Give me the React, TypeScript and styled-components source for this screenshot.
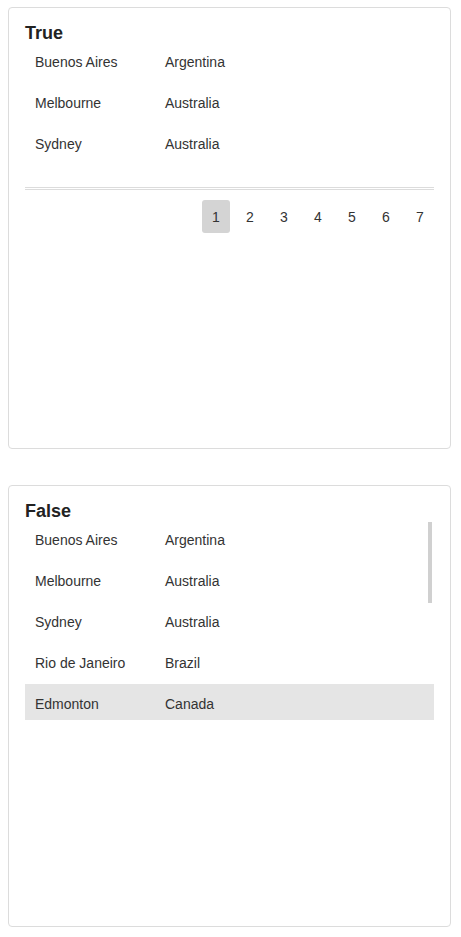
import React from "react";
import styled, { createGlobalStyle } from "styled-components";

const Global = createGlobalStyle`
  html, body { margin: 0; padding: 0; background: #fff; }
  body { font-family: "Liberation Sans", Arial, sans-serif; color: #333; }
`;

const Page = styled.div`
  display: flex;
  flex-direction: column;
  gap: 36px;
  padding: 7px 10px 10px 8px;
`;

const Card = styled.section`
  box-sizing: border-box;
  height: 442px;
  border: 1px solid #dcdcdc;
  border-radius: 4px;
  padding: 14px 16px;
  display: flex;
  flex-direction: column;
`;

const Title = styled.h3`
  margin: 1px 0 -1px;
  font-size: 18px;
  line-height: 20px;
  font-weight: 700;
  color: #222;
`;

const List = styled.div`
  position: relative;
  display: flex;
  flex-direction: column;
  gap: 5px;
`;

const Row = styled.div<{ $active?: boolean }>`
  display: flex;
  height: 36px;
  box-sizing: border-box;
  padding: 12px 10px 8px;
  font-size: 14px;
  line-height: 16px;
  color: #333;
  background: ${(p) => (p.$active ? "#e5e5e5" : "transparent")};
`;

const City = styled.span`
  width: 130px;
  flex: none;
`;

const Country = styled.span``;

const Divider = styled.div`
  margin-top: 27px;
  height: 1px;
  border-top: 1px solid #dcdcdc;
  border-bottom: 1px solid #dcdcdc;
`;

const Pager = styled.nav`
  display: flex;
  justify-content: flex-end;
  gap: 6px;
  margin-top: 10px;
`;

const PageButton = styled.button<{ $active?: boolean }>`
  width: 28px;
  height: 33px;
  padding: 0;
  border: none;
  border-radius: 3px;
  font-family: "Liberation Sans", Arial, sans-serif;
  font-size: 14px;
  color: #333;
  background: ${(p) => (p.$active ? "#d4d4d4" : "transparent")};
  cursor: pointer;
`;

const ScrollThumb = styled.div`
  position: absolute;
  top: 2px;
  right: 2px;
  width: 4px;
  height: 81px;
  background: #d0d0d0;
`;

const rows = [
  ["Buenos Aires", "Argentina"],
  ["Melbourne", "Australia"],
  ["Sydney", "Australia"],
  ["Rio de Janeiro", "Brazil"],
  ["Edmonton", "Canada"],
];

export default function App() {
  return (
    <>
      <Global />
      <Page>
        <Card>
          <Title>True</Title>
          <List>
            {rows.slice(0, 3).map(([c, k]) => (
              <Row key={c}>
                <City>{c}</City>
                <Country>{k}</Country>
              </Row>
            ))}
          </List>
          <Divider />
          <Pager>
            {[1, 2, 3, 4, 5, 6, 7].map((n) => (
              <PageButton key={n} $active={n === 1}>
                {n}
              </PageButton>
            ))}
          </Pager>
        </Card>
        <Card>
          <Title>False</Title>
          <List>
            {rows.map(([c, k], i) => (
              <Row key={c} $active={i === 4}>
                <City>{c}</City>
                <Country>{k}</Country>
              </Row>
            ))}
            <ScrollThumb />
          </List>
        </Card>
      </Page>
    </>
  );
}
